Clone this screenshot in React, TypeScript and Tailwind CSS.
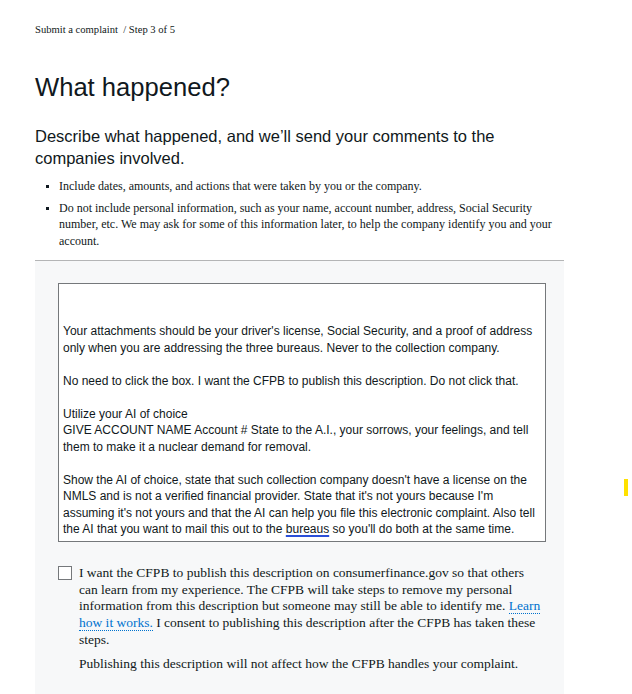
const serif = { fontFamily: '"Liberation Serif", "Times New Roman", serif' };

export default function App() {
  return (
    <div className="min-h-[694px] w-[632px] bg-white text-[#101820] relative overflow-hidden">
      <div className="pl-[35px] w-[564px]">
        {/* breadcrumb */}
        <div className="pt-[23px] text-[10.6px] leading-[14px] font-['Liberation_Serif',serif]">
          Submit a complaint&nbsp; / Step 3 of 5
        </div>

        <h1 className="mt-[34px] text-[25.6px] leading-[32px] font-['Liberation_Sans',Arial,sans-serif] font-normal">
          What happened?
        </h1>

        <p className="mt-[22px] text-[16.5px] leading-[22px] font-['Liberation_Sans',Arial,sans-serif]">
          Describe what happened, and we’ll send your comments to the companies involved.
        </p>

        <ul className="mt-[9px] pl-[24px] list-[square] text-[12px] leading-[16.5px] font-['Liberation_Serif',serif] marker:text-[10px]">
          <li>Include dates, amounts, and actions that were taken by you or the company.</li>
          <li className="mt-[5px] pr-[4px]">
            Do not include personal information, such as your name, account number, address, Social Security
            number, etc. We may ask for some of this information later, to help the company identify you and your
            account.
          </li>
        </ul>

        {/* description panel */}
        <div className="mt-[11px] border-t border-[#b4b5b6] bg-[#f7f8f9] pt-[22px] pl-[23px] pb-[40px]">
          <div className="w-[488px] h-[259px] border border-[#75787b] bg-white px-[4px] py-[4px] text-[12px] leading-[16.5px] font-['Liberation_Sans',Arial,sans-serif] text-[#101820]">
            <div className="h-[35px]" />
            <p>
              Your attachments should be your driver's license, Social Security, and a proof of address
              only when you are addressing the three bureaus. Never to the collection company.
            </p>
            <p className="mt-[16.5px]">
              No need to click the box. I want the CFPB to publish this description. Do not click that.
            </p>
            <p className="mt-[16.5px]">
              Utilize your AI of choice
              <br />
              GIVE ACCOUNT NAME Account # State to the A.I., your sorrows, your feelings, and tell
              them to make it a nuclear demand for removal.
            </p>
            <p className="mt-[16.5px]">
              Show the AI of choice, state that such collection company doesn't have a license on the
              NMLS and is not a verified financial provider. State that it's not yours because I'm
              assuming it's not yours and that the AI can help you file this electronic complaint. Also tell
              the AI that you want to mail this out to the{' '}
              <span className="underline decoration-[#2b4fd8] decoration-[2px] underline-offset-[2px]">bureaus</span>{' '}
              so you'll do both at the same time.
            </p>
          </div>

          <div className="mt-[23px] flex gap-[7px]" style={serif}>
            <div className="mt-[1px] w-[14px] h-[14px] shrink-0 border border-[#75787b] bg-white" />
            <div className="w-[480px] text-[13.5px] leading-[16.7px]">
              <p>
                I want the CFPB to publish this description on consumerfinance.gov so that others
                <br />
                can learn from my experience. The CFPB will take steps to remove my personal
                <br />
                information from this description but someone may still be able to identify me.{' '}
                <span className="text-[#0072ce] border-b border-dotted border-[#0072ce]">
                  Learn
                  <br />
                  how it works.
                </span>{' '}
                I consent to publishing this description after the CFPB has taken these
                <br />
                steps.
              </p>
              <p className="mt-[7px]">Publishing this description will not affect how the CFPB handles your complaint.</p>
            </div>
          </div>
        </div>
      </div>

      {/* stray highlight marker at the right edge */}
      <div className="absolute left-[624px] top-[479px] w-[4px] h-[17px] bg-[#ffe100]" />
    </div>
  );
}
